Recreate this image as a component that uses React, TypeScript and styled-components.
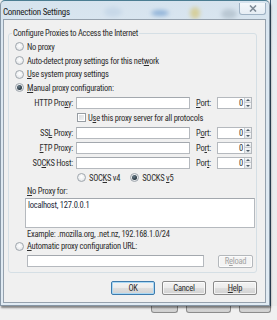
import React from 'react';
import styled, { createGlobalStyle } from 'styled-components';

const GlobalStyle = createGlobalStyle`
  html, body { margin: 0; padding: 0; }
  body {
    width: 277px;
    height: 320px;
    overflow: hidden;
    background: #f0f0f0;
    font-family: "Liberation Sans Narrow", "Roboto Condensed", "DejaVu Sans Condensed", "Liberation Sans", sans-serif;
    font-size: 8.5px;
    letter-spacing: -0.25px;
    color: #2e2e2e;
  }
`;

const Page = styled.div`
  width: 277px;
  height: 320px;
  display: flex;
  flex-direction: column;
  background: #f0f0f0;
`;

const Desk = styled.div`
  display: flex;
  height: 306px;
`;

const Window = styled.div`
  width: 270px;
  height: 306px;
  flex: none;
  box-sizing: border-box;
  display: flex;
  flex-direction: column;
  border: 1px solid #8797a6;
  border-top-color: #4b7d92;
  border-radius: 5px 5px 0 0;
  background: linear-gradient(180deg, #d6e3ee 0%, #dbe7f1 12%, #e1ebf3 100%);
  box-shadow: 1px 2px 2px rgba(0, 0, 0, 0.45);
  position: relative;
  z-index: 1;
`;

const SideStrip = styled.div`
  flex: 1;
  border-left: 1px solid #3c5a74;
  background: linear-gradient(180deg, #dfe8f0 0%, #e9edf1 20%, #ebebeb 100%);
`;

const TitleBar = styled.div`
  position: relative;
  height: 18px;
  flex: none;
  display: flex;
  align-items: flex-start;
`;

const Glass = styled.svg`
  position: absolute;
  left: 0;
  top: 0;
`;

const Title = styled.span`
  position: relative;
  margin: 6px 0 0 2px;
  font-size: 9px;
  line-height: 11px;
  color: #1c1c1c;
`;

const CloseButton = styled.div`
  position: relative;
  margin: 2px 3px 0 auto;
  width: 27px;
  height: 12px;
  box-sizing: border-box;
  border: 1px solid #9fb2c4;
  border-top: none;
  border-radius: 0 0 3px 3px;
  background: linear-gradient(180deg, #f4f8fb 0%, #e6edf4 100%);
  display: flex;
  align-items: center;
  justify-content: center;
`;

const Client = styled.div`
  flex: 1;
  margin: 0 3px 2px 2px;
  border: 1px solid #95a1ad;
  background: #f0f0f0;
  display: flex;
  flex-direction: column;
`;

const GroupBox = styled.div`
  margin: 13px 8px 0 4px;
  border: 1px solid #d5dfe5;
  border-radius: 3px;
  display: flex;
  flex-direction: column;
  padding-bottom: 4px;
`;

const Legend = styled.span`
  align-self: flex-start;
  margin: -7px 0 0 3px;
  padding: 0 1px;
  background: #f0f0f0;
  line-height: 12px;
`;

const OptionRow = styled.div<{ $indent?: number; $height?: number; $top?: number }>`
  display: flex;
  align-items: center;
  gap: 3px;
  height: ${p => p.$height ?? 13.7}px;
  margin-top: ${p => p.$top ?? 0}px;
  padding-left: ${p => p.$indent ?? 6}px;
  white-space: nowrap;
`;

const Radio = styled.span<{ $checked?: boolean }>`
  flex: none;
  width: 9px;
  height: 9px;
  box-sizing: border-box;
  border-radius: 50%;
  border: 1px solid #a0a7ae;
  background: radial-gradient(circle at 50% 40%, #ffffff 0%, #eceef0 55%, #d3d7db 100%);
  display: flex;
  align-items: center;
  justify-content: center;

  &::after {
    content: '';
    display: ${p => (p.$checked ? 'block' : 'none')};
    width: 5px;
    height: 5px;
    border-radius: 50%;
    background: radial-gradient(circle at 40% 35%, #6b7f8c 0%, #26343e 70%);
  }
`;

const Checkbox = styled.span`
  flex: none;
  width: 9px;
  height: 9px;
  box-sizing: border-box;
  border: 1px solid #969ca2;
  background: linear-gradient(135deg, #d6d9dc 0%, #f4f5f6 100%);
  box-shadow: inset 0 0 0 1px #ffffff;
  margin-right: -1px;
`;

const Key = styled.u`
  text-decoration-thickness: 1px;
  text-underline-offset: 1px;
`;

const FieldRow = styled.div<{ $top: number }>`
  display: flex;
  align-items: center;
  height: 12px;
  margin-top: ${p => p.$top}px;
  white-space: nowrap;
`;

const FieldLabel = styled.span<{ $width: number; $right?: boolean; $left?: number }>`
  flex: none;
  width: ${p => p.$width}px;
  margin-left: ${p => p.$left ?? 0}px;
  text-align: ${p => (p.$right ? 'right' : 'left')};
`;

const TextBox = styled.div<{ $width: number; $left?: number; $height?: number }>`
  flex: none;
  width: ${p => p.$width}px;
  height: ${p => p.$height ?? 12}px;
  margin-left: ${p => p.$left ?? 0}px;
  box-sizing: border-box;
  background: #ffffff;
  border: 1px solid #b5b9be;
  border-top-color: #a3a8ae;
`;

const PortBox = styled.div`
  flex: none;
  width: 35px;
  height: 12px;
  box-sizing: border-box;
  display: flex;
  background: #ffffff;
  border: 1px solid #b5b9be;
`;

const PortValue = styled.span`
  flex: 1;
  text-align: right;
  padding-right: 1px;
  line-height: 10px;
`;

const Spinner = styled.div`
  flex: none;
  width: 6px;
  display: flex;
  flex-direction: column;
  border-left: 1px solid #c9ccd0;
`;

const SpinHalf = styled.span<{ $down?: boolean }>`
  flex: 1;
  display: flex;
  align-items: center;
  justify-content: center;
  background: linear-gradient(180deg, #f6f7f8, #e2e5e8);
  border-top: ${p => (p.$down ? '1px solid #c9ccd0' : 'none')};

  &::after {
    content: '';
    border-left: 2px solid transparent;
    border-right: 2px solid transparent;
    ${p => (p.$down ? 'border-top: 2px solid #4d5a66;' : 'border-bottom: 2px solid #4d5a66;')}
  }
`;

const VersionGroup = styled.div`
  display: flex;
  align-items: center;
  gap: 10px;
`;

const VersionOption = styled.span`
  display: flex;
  align-items: center;
  gap: 3px;
`;

const NoProxyArea = styled.div`
  margin: 1px 0 0 16px;
  width: 230px;
  height: 30px;
  box-sizing: border-box;
  padding: 1px 2px;
  background: #ffffff;
  border: 1px solid #b5b9be;
  border-top-color: #a3a8ae;
  line-height: 10px;
  color: #1c2a3a;
`;

const UrlRow = styled.div`
  display: flex;
  align-items: center;
  margin-top: 2px;
  height: 13px;
  padding-left: 18px;
  gap: 14px;
`;

const Button = styled.div<{ $width: number; $default?: boolean; $disabled?: boolean }>`
  flex: none;
  width: ${p => p.$width}px;
  height: ${p => (p.$disabled ? 13 : 14)}px;
  box-sizing: border-box;
  display: flex;
  align-items: center;
  justify-content: center;
  border: 1px solid ${p => (p.$default ? '#3d7bad' : p.$disabled ? '#b4b8bc' : '#8a8a8a')};
  border-radius: 2px;
  background: ${p =>
    p.$disabled
      ? '#f4f4f4'
      : 'linear-gradient(180deg, #f3f3f3 0%, #ececec 48%, #dedede 52%, #d2d2d2 100%)'};
  box-shadow: inset 0 0 0 1px ${p => (p.$default ? '#a9d8f5' : 'rgba(255,255,255,0.7)')};
  color: ${p => (p.$disabled ? '#a3a3a3' : '#2e2e2e')};
`;

const ButtonRow = styled.div`
  display: flex;
  justify-content: flex-end;
  gap: 7px;
  margin: 8px 8px 0 0;
`;

const BottomStrip = styled.div`
  flex: 1;
  display: flex;
  align-items: flex-start;
  padding-left: 151px;
  gap: 8px;
`;

const GhostButton = styled.span<{ $width: number }>`
  width: ${p => p.$width}px;
  height: 6px;
  border: 1px solid #8c8c8c;
  border-top: none;
  border-radius: 0 0 3px 3px;
  background: linear-gradient(180deg, #dcdcdc, #cfcfcf);
`;

const PortField = ({ label }: { label: React.ReactNode }) => (
  <>
    <FieldLabel $width={21} $left={6}>
      {label}
    </FieldLabel>
    <PortBox>
      <PortValue>0</PortValue>
      <Spinner>
        <SpinHalf />
        <SpinHalf $down />
      </Spinner>
    </PortBox>
  </>
);

const App = () => {
  return (
    <Page>
      <GlobalStyle />
      <Desk>
        <Window>
          <TitleBar>
            <Glass width="268" height="18">
              <defs>
                <filter id="soft" x="-50%" y="-50%" width="200%" height="200%">
                  <feGaussianBlur stdDeviation="2.2" />
                </filter>
              </defs>
              <g filter="url(#soft)">
                <ellipse cx="112" cy="11" rx="9" ry="5" fill="#c7d8e8" />
                <ellipse cx="159" cy="12" rx="9" ry="3" fill="#8fb2d8" />
                <ellipse cx="194" cy="12" rx="5" ry="6" fill="#d6cf9c" />
                <ellipse cx="228" cy="13" rx="8" ry="5" fill="#b9c7d3" />
              </g>
            </Glass>
            <Title>Connection Settings</Title>
            <CloseButton>
              <svg width="8" height="7" viewBox="0 0 8 7">
                <path d="M1 0.5 L7 6.5 M7 0.5 L1 6.5" stroke="#7f8b97" strokeWidth="1.6" />
              </svg>
            </CloseButton>
          </TitleBar>
          <Client>
            <GroupBox>
              <Legend>Configure Proxies to Access the Internet</Legend>
              <OptionRow $top={1}>
                <Radio />
                <span>No proxy</span>
              </OptionRow>
              <OptionRow>
                <Radio />
                <span>
                  Auto-detect proxy settings for this net<Key>w</Key>ork
                </span>
              </OptionRow>
              <OptionRow>
                <Radio />
                <span>
                  <Key>U</Key>se system proxy settings
                </span>
              </OptionRow>
              <OptionRow>
                <Radio $checked />
                <span>
                  <Key>M</Key>anual proxy configuration:
                </span>
              </OptionRow>

              <FieldRow $top={2}>
                <FieldLabel $width={64} $right>
                  HTTP Pro<Key>x</Key>y:
                </FieldLabel>
                <TextBox $width={114} $left={3} />
                <PortField label={<><Key>P</Key>ort:</>} />
              </FieldRow>
              <OptionRow $indent={68} $height={18}>
                <Checkbox />
                <span>
                  U<Key>s</Key>e this proxy server for all protocols
                </span>
              </OptionRow>
              <FieldRow $top={0}>
                <FieldLabel $width={64} $right>
                  SS<Key>L</Key> Proxy:
                </FieldLabel>
                <TextBox $width={114} $left={3} />
                <PortField label={<>P<Key>o</Key>rt:</>} />
              </FieldRow>
              <FieldRow $top={3}>
                <FieldLabel $width={64} $right>
                  <Key>F</Key>TP Proxy:
                </FieldLabel>
                <TextBox $width={114} $left={3} />
                <PortField label={<>Po<Key>r</Key>t:</>} />
              </FieldRow>
              <FieldRow $top={3}>
                <FieldLabel $width={64} $right>
                  SO<Key>C</Key>KS Host:
                </FieldLabel>
                <TextBox $width={114} $left={3} />
                <PortField label={<>Por<Key>t</Key>:</>} />
              </FieldRow>
              <OptionRow $indent={68} $height={14} $top={2}>
                <VersionGroup>
                  <VersionOption>
                    <Radio />
                    <span>
                      SOC<Key>K</Key>S v4
                    </span>
                  </VersionOption>
                  <VersionOption>
                    <Radio $checked />
                    <span>
                      SOCKS <Key>v</Key>5
                    </span>
                  </VersionOption>
                </VersionGroup>
              </OptionRow>
              <OptionRow $indent={18} $height={12}>
                <span>
                  <Key>N</Key>o Proxy for:
                </span>
              </OptionRow>
              <NoProxyArea>localhost, 127.0.0.1</NoProxyArea>
              <OptionRow $indent={18} $height={12}>
                <span>Example: .mozilla.org, .net.nz, 192.168.1.0/24</span>
              </OptionRow>
              <OptionRow $height={13}>
                <Radio />
                <span>
                  <Key>A</Key>utomatic proxy configuration URL:
                </span>
              </OptionRow>
              <UrlRow>
                <TextBox $width={177} />
                <Button $width={35} $disabled>
                  R<Key>e</Key>load
                </Button>
              </UrlRow>
            </GroupBox>
            <ButtonRow>
              <Button $width={44} $default>
                OK
              </Button>
              <Button $width={44}>Cancel</Button>
              <Button $width={44}>
                <Key>H</Key>elp
              </Button>
            </ButtonRow>
          </Client>
        </Window>
        <SideStrip />
      </Desk>
      <BottomStrip>
        <GhostButton $width={25} />
        <GhostButton $width={43} />
        <GhostButton $width={30} />
      </BottomStrip>
    </Page>
  );
};

export default App;
